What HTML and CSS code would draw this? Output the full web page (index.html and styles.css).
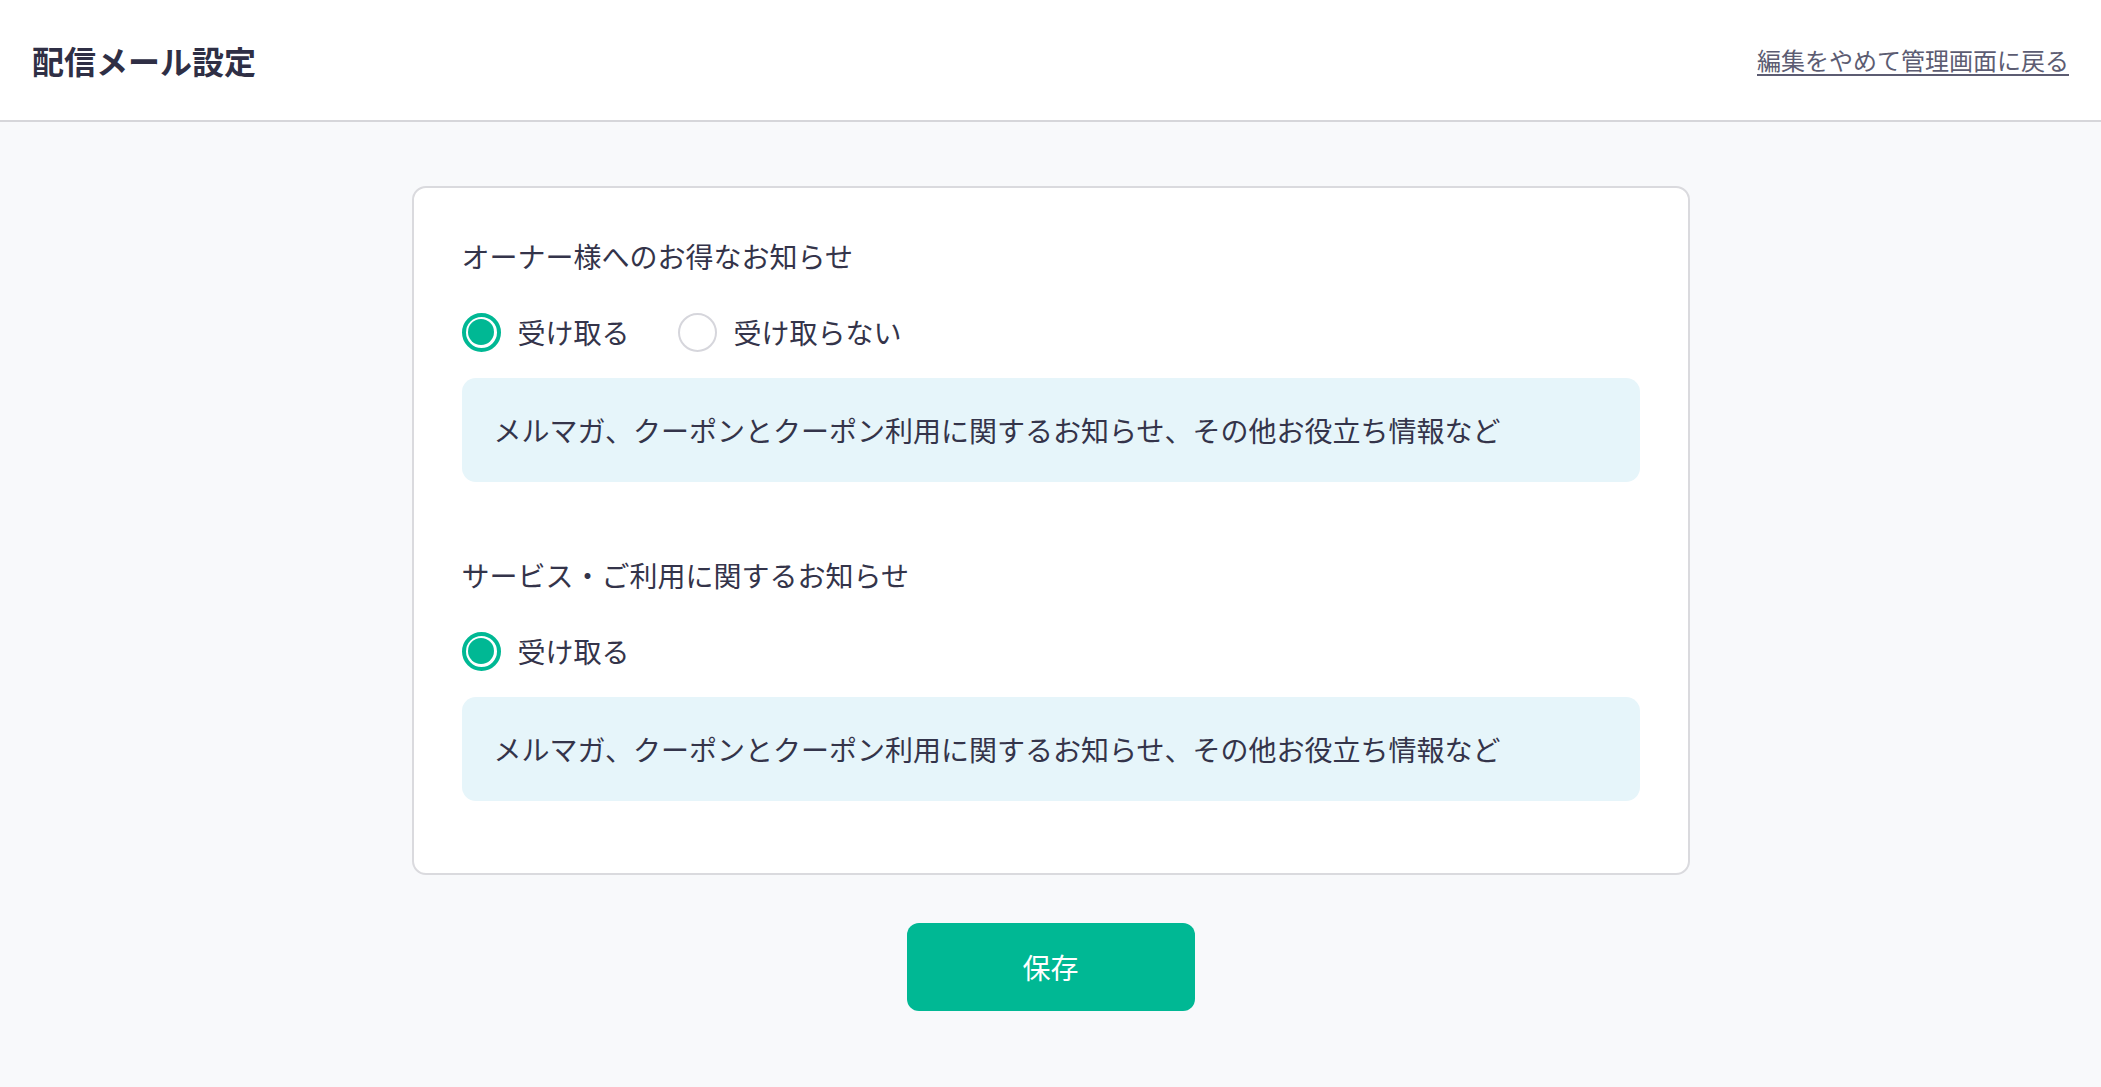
FILE: index.html
```html
<!DOCTYPE html>
<html lang="ja">
<head>
  <meta charset="UTF-8">
  <meta name="viewport" content="width=device-width, initial-scale=1.0">
  <title>配信メール設定</title>
  <link rel="stylesheet" href="styles.css">
</head>
<body>
  <header class="header">
    <h1 class="header-title">配信メール設定</h1>
    <a class="header-link" href="#">編集をやめて管理画面に戻る</a>
  </header>

  <main class="main">
    <form class="card">
      <section class="setting">
        <div class="setting-label">オーナー様へのお得なお知らせ</div>
        <div class="radio-group">
          <label class="radio">
            <input type="radio" name="owner" checked>
            <span class="radio-mark"></span>
            <span class="radio-text">受け取る</span>
          </label>
          <label class="radio">
            <input type="radio" name="owner">
            <span class="radio-mark"></span>
            <span class="radio-text">受け取らない</span>
          </label>
        </div>
        <div class="setting-note">メルマガ、クーポンとクーポン利用に関するお知らせ、その他お役立ち情報など</div>
      </section>

      <section class="setting">
        <div class="setting-label">サービス・ご利用に関するお知らせ</div>
        <div class="radio-group">
          <label class="radio">
            <input type="radio" name="service" checked>
            <span class="radio-mark"></span>
            <span class="radio-text">受け取る</span>
          </label>
        </div>
        <div class="setting-note">メルマガ、クーポンとクーポン利用に関するお知らせ、その他お役立ち情報など</div>
      </section>
    </form>

    <div class="actions">
      <button class="save-button" type="button">保存</button>
    </div>
  </main>
</body>
</html>
```

FILE: styles.css
```css
html, body {
  margin: 0;
  padding: 0;
  background: #f8f9fb;
  color: #34344a;
  font-family: "Noto Sans CJK JP", "Noto Sans", sans-serif;
}

.header {
  height: 122px;
  box-sizing: border-box;
  display: flex;
  align-items: center;
  justify-content: space-between;
  padding: 0 32px;
  background: #fff;
  border-bottom: 2px solid #d6d6da;
}

.header-title {
  margin: 0;
  font-size: 32px;
  font-weight: 700;
  line-height: 40px;
  color: #2f2f45;
}

.header-link {
  font-size: 24px;
  line-height: 32px;
  color: #5c5c72;
  text-decoration: underline;
  text-underline-offset: 4px;
}

.main {
  padding: 64px 0 80px;
}

.card {
  width: 1278px;
  box-sizing: border-box;
  margin: 0 auto;
  padding: 48px;
  background: #fff;
  border: 2px solid #dadade;
  border-radius: 14px;
  display: flex;
  flex-direction: column;
  gap: 49px;
}

.setting {
  padding-bottom: 24px;
}

.setting-label {
  font-size: 28px;
  line-height: 40px;
  margin-bottom: 36px;
}

.radio-group {
  display: flex;
  align-items: center;
  gap: 48px;
  height: 40px;
  margin-bottom: 26px;
}

.radio {
  display: flex;
  align-items: center;
  gap: 17px;
  cursor: pointer;
}

.radio input {
  display: none;
}

.radio-mark {
  width: 39px;
  height: 39px;
  box-sizing: border-box;
  border: 2px solid #d6d6dc;
  border-radius: 50%;
  background: #fff;
  position: relative;
}

.radio input:checked + .radio-mark {
  border: 4px solid #00b894;
}

.radio input:checked + .radio-mark::after {
  content: "";
  position: absolute;
  top: 2.5px;
  left: 2.5px;
  width: 26px;
  height: 26px;
  border-radius: 50%;
  background: #00b894;
}

.radio-text {
  font-size: 28px;
  line-height: 40px;
}

.setting-note {
  background: #e6f5fa;
  border-radius: 14px;
  padding: 32px;
  font-size: 28px;
  line-height: 40px;
}

.actions {
  display: flex;
  justify-content: center;
  margin-top: 48px;
}

.save-button {
  width: 288px;
  height: 88px;
  border: none;
  border-radius: 12px;
  background: #00b894;
  color: #fff;
  font-family: inherit;
  font-size: 28px;
  cursor: pointer;
}
```
